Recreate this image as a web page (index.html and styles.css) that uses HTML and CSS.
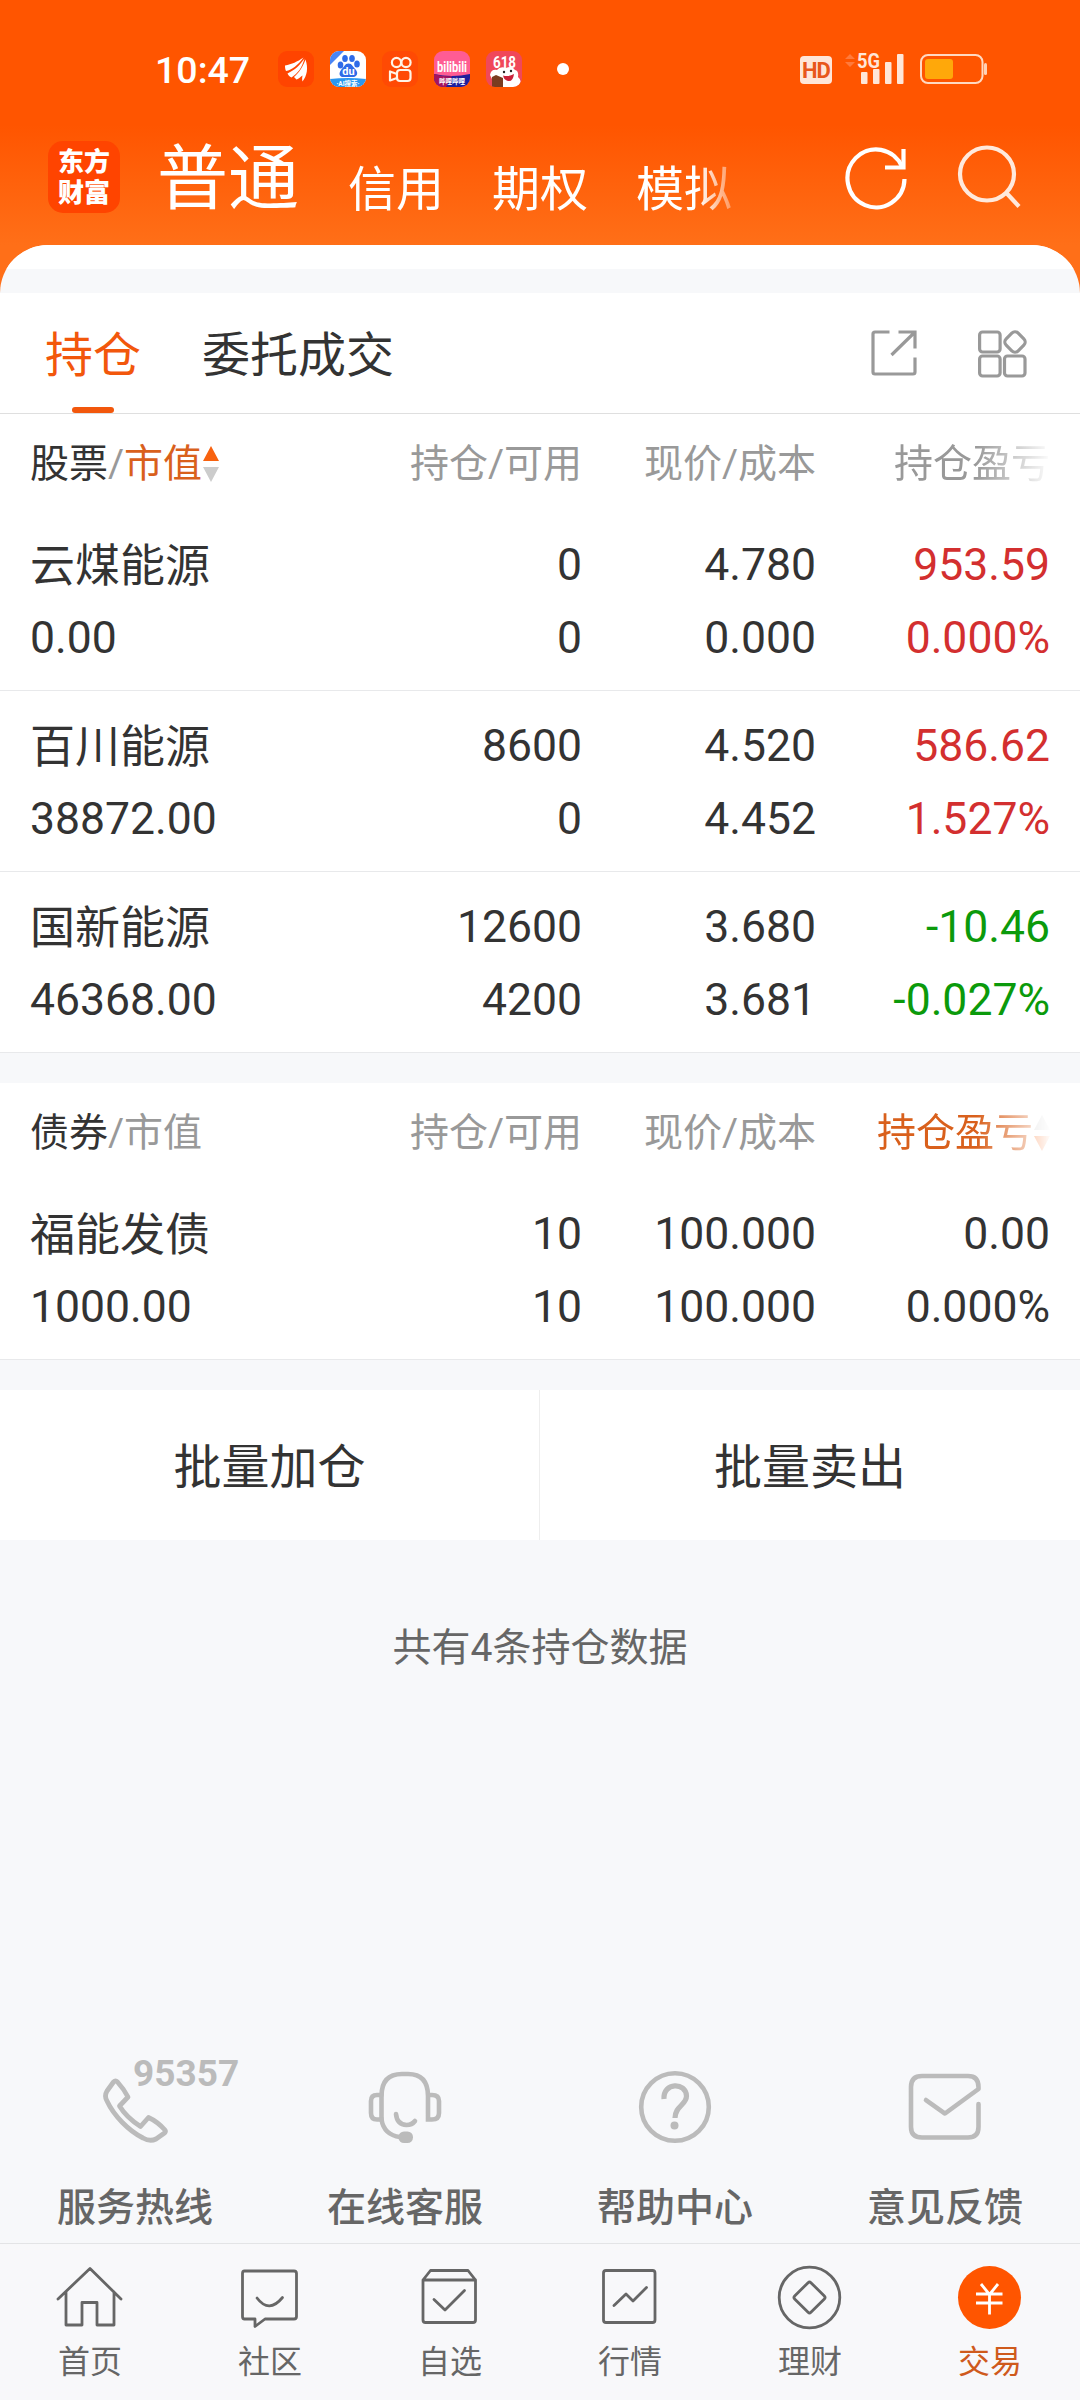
FILE: index.html
```html
<!DOCTYPE html>
<html lang="zh-CN">
<head>
<meta charset="utf-8">
<title>持仓</title>
<link rel="stylesheet" href="styles.css">
</head>
<body>
<div class="app">
  <header class="top">
    <div class="status">
      <span class="clock">10:47</span>
      <div class="notices">
        <svg width="36" height="36" viewBox="0 0 36 36"><rect width="36" height="36" rx="9" fill="#ff4400"/><path d="M7 14.500C14 13 19 11 25.500 6.500C20 14 14 19 8 20C7 18 7 16 7 14.500ZM9.500 22.500C17 19 22 14 26.500 7.500C24 17 20 22 13.500 26.500C11.500 25.500 10 24 9.500 22.500ZM16 26C22 21 25 15 27.500 8.500C30.500 17 29 25 24.500 30.500C24 28.500 24 27 24.500 24.500C22.500 26 21 27.500 18.500 28.500Z" fill="#fff"/></svg>
        <svg width="36" height="36" viewBox="0 0 36 36"><clipPath id="bd"><rect width="36" height="36" rx="9"/></clipPath><g clip-path="url(#bd)"><rect width="36" height="36" fill="#fff"/><path d="M0 0H14L0 14Z" fill="#4a86f5"/><path d="M0 28Q18 26 36 28V36H0Z" fill="#2a97f0"/><g fill="#2f6be8"><ellipse cx="10.500" cy="14" rx="2.800" ry="3.600"/><ellipse cx="15" cy="7.500" rx="2.800" ry="3.600"/><ellipse cx="22" cy="7.500" rx="2.800" ry="3.600"/><ellipse cx="27" cy="13" rx="2.800" ry="3.600"/><path d="M18.500 12.500C22 12.500 23 16 26 19C29 23 26 26.500 22 26H14C10 26.500 8 23 11 19C14 16 15 12.500 18.500 12.500Z"/></g><text x="18.500" y="24" class="tiny du">du</text><text x="18" y="34.500" class="tiny cap">·AI搜索·</text></g></svg>
        <svg width="36" height="36" viewBox="0 0 36 36"><rect width="36" height="36" rx="9" fill="#ff4a04"/><g fill="none" stroke="#fff4e6" stroke-width="2.200"><circle cx="14.500" cy="11.500" r="4.600"/><circle cx="24" cy="11.500" r="4.600"/><rect x="15" y="19" width="13.500" height="11" rx="3"/><path d="M15 23L8 20.500V29.500L15 27" stroke-linejoin="round"/></g></svg>
        <svg width="36" height="36" viewBox="0 0 36 36"><clipPath id="bl"><rect width="36" height="36" rx="9"/></clipPath><g clip-path="url(#bl)"><rect width="36" height="36" fill="#ff5c93"/><path d="M0 23Q18 27 36 23V36H0Z" fill="#1f1f9c"/><path d="M0 23Q10 26 18 25L12 36H0Z" fill="#a5145f"/><text x="18" y="20.500" class="tiny bili" textLength="30" lengthAdjust="spacingAndGlyphs">bilibili</text><text x="18" y="32.500" class="tiny cap">哔哩哔哩</text></g></svg>
        <svg width="36" height="36" viewBox="0 0 36 36"><clipPath id="jd"><rect width="36" height="36" rx="9"/></clipPath><g clip-path="url(#jd)"><rect width="36" height="36" fill="#f0485a"/><text x="18.500" y="16.500" class="tiny sale" textLength="23" lengthAdjust="spacingAndGlyphs">618</text><path d="M4 24Q5 18 11 19Q14 15 20 17Q26 14 29 19Q33 20 32 26Q38 31 30 36H10Z" fill="#fff"/><circle cx="18" cy="21" r="1.200" fill="#222"/><circle cx="25" cy="20" r="1.200" fill="#222"/><path d="M17 24.500Q23 26 28 23Q27 31 22 30Q18 29 17 24.500Z" fill="#c9213a"/><path d="M6 26L10 24L17 27V36H6Z" fill="#7a3c20"/></g></svg>
      </div>
      <span class="dot"></span>
      <div class="signals">
        <span class="hd">HD</span>
        <svg class="cell" width="60" height="36" viewBox="845 51 60 36"><path d="M845 59L850 54L855 59ZM845 62L850 67L855 62Z" fill="#ff7a3c"/><g fill="#ffe6d8"><text x="857" y="67.500" class="net" textLength="23" lengthAdjust="spacingAndGlyphs">5G</text><rect x="861" y="72" width="6.500" height="12" rx="1"/><rect x="873" y="69" width="6.500" height="15" rx="1"/><rect x="885" y="62" width="6.500" height="22" rx="1"/><rect x="897" y="54" width="6.500" height="30" rx="1"/></g></svg>
        <svg class="battery" width="68" height="30" viewBox="0 0 68 30"><rect x="1" y="1" width="61.500" height="28" rx="7" fill="none" stroke="#ffd9c2" stroke-width="2"/><rect x="5" y="5" width="28" height="20" rx="3" fill="#ffa80a"/><rect x="64" y="9" width="3" height="12" rx="1.500" fill="#ffd0b5"/></svg>
      </div>
    </div>
    <nav class="accounts">
      <span class="brand"><span>东方</span><span>财富</span></span>
      <span class="account current">普通</span>
      <div class="others"><span>信用</span><span>期权</span><span>模拟</span></div>
      <div class="actions">
        <svg width="66" height="70" viewBox="844 142 66 70" fill="none" stroke="#fff" stroke-width="4.200"><path d="M904.500 179A28.500 29 0 1 1 902 166.500"/><path d="M903.500 149V167.500H885"/></svg>
        <svg width="66" height="70" viewBox="956 142 66 70" fill="none" stroke="#ffe9dc" stroke-width="4.200"><ellipse cx="987" cy="174" rx="27" ry="26.500"/><path d="M1006 192.500L1019 206.500"/></svg>
      </div>
    </nav>
  </header>

  <main class="panel">
    <div class="lip"></div>
    <div class="tabs">
      <span class="tab active">持仓</span>
      <span class="tab">委托成交</span>
      <div class="tools">
        <svg width="48" height="50" viewBox="870 328 48 50" fill="none" stroke="#999" stroke-width="3.200"><path d="M889.500 332H875Q873 332 873 334V372Q873 374 875 374H913Q915 374 915 372V357.500"/><path d="M898.500 332H915V348.500M915 332L891.500 355"/></svg>
        <svg width="50" height="50" viewBox="978 328.500 50 50" fill="none" stroke="#999" stroke-width="3.200"><rect x="979.600" y="332.500" width="20.500" height="20" rx="3"/><rect x="979.600" y="356.500" width="20.500" height="20" rx="3"/><rect x="1004.500" y="356.500" width="20.500" height="20" rx="3"/><rect x="1006.500" y="334" width="17" height="17" rx="4.500" transform="rotate(45 1015 342.500)"/></svg>
      </div>
    </div>

    <section class="holdings">
      <div class="row head">
        <div class="first"><b>股票</b>/<em>市值</em><svg class="sort" width="16" height="36" viewBox="0 0 16 36"><path d="M8 0L16 15H0Z" fill="#f8620f"/><path d="M0 21H16L8 36Z" fill="#ccc"/></svg></div>
        <div>持仓/可用</div><div>现价/成本</div><div class="fade">持仓盈亏</div>
      </div>
      <div class="row"><div class="name">云煤能源</div><div>0</div><div>4.780</div><div class="up">953.59</div><div class="first">0.00</div><div>0</div><div>0.000</div><div class="up">0.000%</div></div>
      <div class="row"><div class="name">百川能源</div><div>8600</div><div>4.520</div><div class="up">586.62</div><div class="first">38872.00</div><div>0</div><div>4.452</div><div class="up">1.527%</div></div>
      <div class="row"><div class="name">国新能源</div><div>12600</div><div>3.680</div><div class="down">-10.46</div><div class="first">46368.00</div><div>4200</div><div>3.681</div><div class="down">-0.027%</div></div>
    </section>

    <section class="holdings">
      <div class="row head">
        <div class="first"><b>债券</b>/市值</div>
        <div>持仓/可用</div><div>现价/成本</div><div class="fade"><em>持仓盈亏</em><svg class="sort" width="16" height="36" viewBox="0 0 16 36"><path d="M8 0L16 15H0Z" fill="#ccc"/><path d="M0 21H16L8 36Z" fill="#f8620f"/></svg></div>
      </div>
      <div class="row"><div class="name">福能发债</div><div>10</div><div>100.000</div><div>0.00</div><div class="first">1000.00</div><div>10</div><div>100.000</div><div>0.000%</div></div>
    </section>

    <div class="batch"><span>批量加仓</span><span>批量卖出</span></div>
    <p class="summary">共有4条持仓数据</p>
  </main>

  <div class="services">
    <div class="service">
      <svg width="216" height="90" viewBox="27 2058 216 90"><g fill="none" stroke="#bbb" stroke-width="4.800" stroke-linejoin="round"><path d="M113.500 2082Q115.500 2080 117.500 2082C122 2087 125 2091 128 2097L119.500 2106C124 2113.500 132 2121 140.500 2126.500L148.500 2117.500C154 2120 160 2124.500 165 2130Q166 2131.500 164.500 2133L156 2139Q150 2142 143 2138C129 2131 114 2116 107 2101Q104 2096 107 2091Z"/></g><text x="133" y="2086" class="hotline">95357</text></svg>
      <span>服务热线</span>
    </div>
    <div class="service">
      <svg width="216" height="90" viewBox="297 2058 216 90"><g fill="none" stroke="#bbb" stroke-width="4.600" stroke-linecap="round"><path d="M381.500 2120V2096Q381.500 2074 402 2074H408Q428 2074 428 2096V2119.500H432Q439 2119.500 439 2113V2101Q439 2095 432 2095H428"/><path d="M381.500 2095H377Q371 2095 371 2101V2113Q371 2119.500 377 2119.500H381.500Q384 2135 400 2137"/><path d="M396 2114Q397 2124.500 406.500 2125Q412 2125 415 2121"/></g><rect x="398.500" y="2131.500" width="14.500" height="11.500" rx="5.500" fill="#bbb"/></svg>
      <span>在线客服</span>
    </div>
    <div class="service">
      <svg width="216" height="90" viewBox="567 2058 216 90"><g fill="none" stroke="#bbb"><circle cx="675" cy="2107" r="33.800" stroke-width="4.600"/><path d="M664 2099C663 2082 686 2082 686.500 2096C686.500 2105 675 2106 675 2118" stroke-width="5.200"/></g><circle cx="674.500" cy="2125.500" r="4" fill="#bbb"/></svg>
      <span>帮助中心</span>
    </div>
    <div class="service">
      <svg width="216" height="90" viewBox="837 2058 216 90"><path d="M978.500 2104V2127Q978.500 2137.500 968 2137.500H922Q911 2137.500 911 2127V2087Q911 2076 922 2076H968Q978.500 2076 978.500 2087V2089L945 2113.500L926 2100" fill="none" stroke="#bbb" stroke-width="4.600" stroke-linecap="round" stroke-linejoin="round"/></svg>
      <span>意见反馈</span>
    </div>
  </div>

  <nav class="dock">
    <div class="item"><svg width="68" height="68" viewBox="56 2263 68 68"><path d="M58 2299L90 2268.500L121 2299M66 2292V2325H82V2302.500H97V2325H114V2292"/></svg><span>首页</span></div>
    <div class="item"><svg width="68" height="68" viewBox="236 2263 68 68"><path d="M244.500 2271H294Q296.500 2271 296.500 2273.500V2316.500Q296.500 2319 294 2319H265L255 2326.500V2319H244.500Q242.500 2319 242.500 2316.500V2273.500Q242.500 2271 244.500 2271Z"/><path d="M257 2298Q269 2314 282.500 2297.500"/></svg><span>社区</span></div>
    <div class="item"><svg width="68" height="68" viewBox="416 2263 68 68"><path d="M423 2280L430.500 2270.500H468L475.500 2280ZM423 2280V2320Q423 2322.500 425.500 2322.500H473Q475.500 2322.500 475.500 2320V2280"/><path d="M434 2299.500L445 2310L464.500 2290.500"/></svg><span>自选</span></div>
    <div class="item"><svg width="68" height="68" viewBox="596 2263 68 68"><rect x="603.500" y="2270.500" width="51.500" height="52" rx="2.500"/><path d="M614 2305.500L626 2294L633 2301L646.500 2287.500"/></svg><span>行情</span></div>
    <div class="item"><svg width="68" height="68" viewBox="776 2263 68 68"><circle cx="809.500" cy="2297.500" r="30.300"/><rect x="798" y="2286" width="23" height="23" rx="2" transform="rotate(45 809.500 2297.500)"/></svg><span>理财</span></div>
    <div class="item on"><svg width="68" height="68" viewBox="956 2263 68 68"><circle cx="989.500" cy="2297.500" r="31.500" class="disc"/><path class="yuan" d="M981 2284L989.500 2294.500L998 2284M989.500 2294V2314.500M976 2294H1002.500M976 2303H1002.500"/></svg><span>交易</span></div>
  </nav>
</div>
</body>
</html>
```

FILE: styles.css
```css
* { box-sizing: border-box; }
body { margin: 0; font-family: Roboto, "Noto Sans CJK SC", sans-serif; color: #333; }
.app {
  width: 1080px; height: 2400px; overflow: hidden;
  display: flex; flex-direction: column;
  background: linear-gradient(#ff5500 0, #ff5500 125px, #ff6f18 245px, #ff6f18 300px) 0 0 / 100% 300px no-repeat #f7f8fa;
}
svg { display: block; flex: none; }

.top { height: 245px; flex: none; }
.status { height: 138px; display: flex; align-items: center; padding: 0 92px 0 155px; }
.clock { width: 123px; padding-top: 2px; font-size: 37.5px; font-weight: 500; color: #fff; }
.notices { display: flex; gap: 16px; }
.tiny { fill: #fff; text-anchor: middle; font-weight: 700; }
.du { font-size: 11px; }
.cap { font-size: 6.5px; }
.bili { font-size: 14px; }
.sale { font-size: 17px; }
.dot { width: 12px; height: 12px; margin-left: 35px; border-radius: 50%; background: #fff; }
.signals { margin-left: auto; display: flex; align-items: center; }
.hd {
  width: 32px; height: 28px; margin: 2px 13px 0 0; border-radius: 4px; background: #ffe6d8;
  color: #e8571a; font-size: 22px; line-height: 29px; font-weight: 700; text-align: center; letter-spacing: -1px;
}
.cell { overflow: visible; }
.net { font-size: 21px; font-weight: 700; }
.battery { margin-left: 15px; }

.accounts { height: 78px; display: flex; align-items: center; padding-left: 48px; color: #fff; }
.brand {
  width: 72px; height: 72px; padding-top: 6px; border-radius: 15px; background: #ff4400;
  display: flex; flex-direction: column; align-items: center;
  font-size: 26px; line-height: 31px; font-weight: 900;
}
.current { margin-left: 37px; width: 191px; padding-top: 4px; font-size: 71px; line-height: 78px; }
.others {
  display: flex; gap: 48px; width: 395px; padding-top: 26px; font-size: 48px; line-height: 56px;
  -webkit-mask-image: linear-gradient(90deg, #000 350px, transparent 400px);
  mask-image: linear-gradient(90deg, #000 350px, transparent 400px);
}
.actions { display: flex; gap: 46px; margin-left: 101px; }

.panel { border-radius: 48px 48px 0 0; overflow: hidden; background: #f7f8fa; flex: none; }
.lip { height: 48px; border-top: 24px solid #fff; }
.tabs {
  height: 121px; display: flex; align-items: center; padding: 0 52px 0 45px;
  background: #fff; border-bottom: 1px solid #dfdfdf; font-size: 48px;
}
.tab { height: 120px; line-height: 125px; margin-right: 61px; }
.active { color: #f2570c; display: flex; flex-direction: column; align-items: center; }
.active::after { content: ""; width: 42px; height: 6px; margin-top: -11px; border-radius: 3px; background: #f2570c; }
.tools { margin-left: auto; display: flex; gap: 60px; }

.holdings { background: #fff; margin-bottom: 30px; }
.row {
  display: grid; grid-template-columns: 301px 251px 234px 234px; grid-auto-rows: 73px;
  height: 181px; padding: 19px 30px 0; border-bottom: 1px solid #e8e9eb;
  font-size: 44.5px; line-height: 73px; text-align: right;
}
.first, .name { text-align: left; }
.name { padding-top: 1px; font-size: 45px; }
.head { height: 96px; padding-top: 14px; border: 0; font-size: 39px; color: #999; }
.head b { font-weight: 400; color: #333; }
.head em { font-style: normal; color: #d9601c; }
.sort { display: inline-block; margin-left: 1px; vertical-align: -5px; }
.fade {
  -webkit-mask-image: linear-gradient(90deg, #000 160px, transparent 236px);
  mask-image: linear-gradient(90deg, #000 160px, transparent 236px);
}
.up { color: #d32f2f; }
.down { color: #0b9a0b; }

.batch { height: 150px; display: flex; background: #fff; font-size: 48px; line-height: 155px; text-align: center; }
.batch span { flex: 0 0 539px; }
.batch span + span { flex: 1; border-left: 1px solid #eee; }
.summary { margin: 78px 0 0; font-size: 39px; line-height: 60px; text-align: center; color: #666; }

.services { margin-top: auto; height: 185px; flex: none; display: flex; }
.service { width: 270px; display: flex; flex-direction: column; align-items: center; color: #666; font-size: 39px; line-height: 60px; font-weight: 500; }
.service svg { overflow: visible; }
.service span { margin-top: 30px; }
.hotline { font-size: 37px; font-weight: 700; fill: #bbb; }

.dock { height: 157px; flex: none; display: flex; border-top: 1px solid #e3e4e6; background: #f8f8fa; }
.item { width: 180px; padding-top: 19px; display: flex; flex-direction: column; align-items: center; color: #666; font-size: 32px; line-height: 48px; }
.item span { margin-top: 7px; }
.item svg { fill: none; stroke: #666; stroke-width: 2.8; stroke-linejoin: round; stroke-linecap: round; }
.on { color: #cf5a1c; }
.item .disc { fill: #ff5500; stroke: none; }
.item .yuan { stroke: #fff; stroke-linecap: butt; }
```
